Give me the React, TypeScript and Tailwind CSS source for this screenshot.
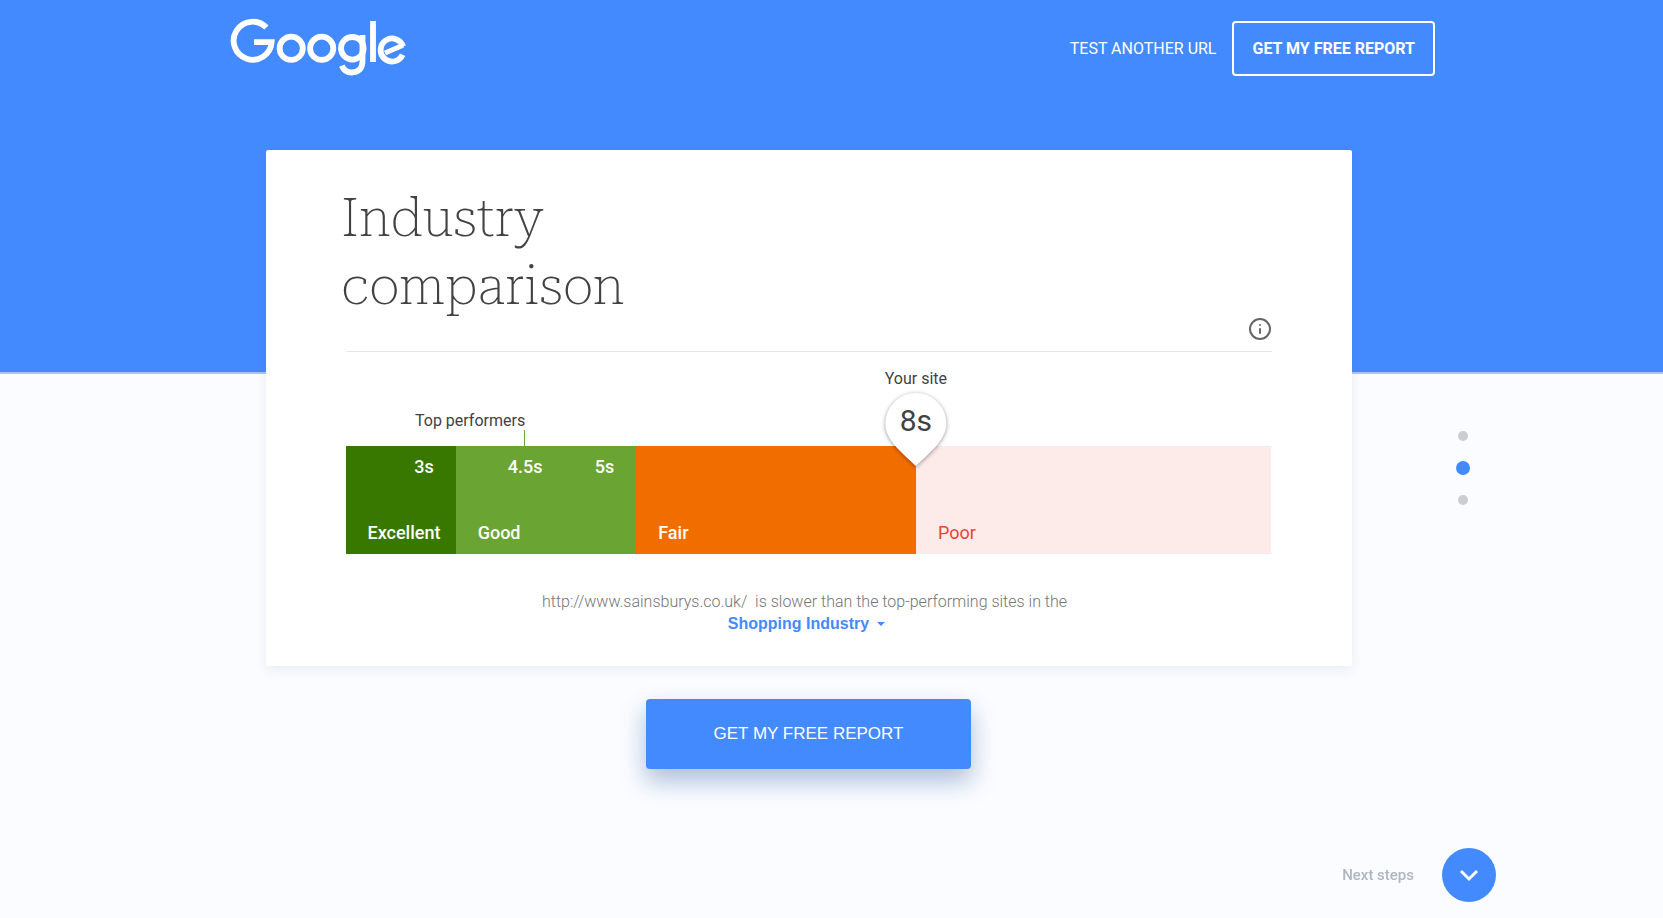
import { ChevronDown, Info } from "lucide-react";

const segments = [
  {
    label: "Excellent",
    limit: "3s",
    className: "w-[11.9%] bg-[#387800] font-medium text-white",
  },
  {
    label: "Good",
    limit: "5s",
    className: "w-[19.5%] bg-[#6aa534] font-medium text-white",
  },
  {
    label: "Fair",
    limit: "",
    className: "w-[30.2%] bg-[#f26d00] font-medium text-white",
  },
  {
    label: "Poor",
    limit: "",
    className: "w-[38.4%] bg-[#fdebe9] text-[#ef4236]",
  },
];

const sections = [
  { label: "Speed", href: "#speed", active: false },
  { label: "Industry comparison", href: "#comparison", active: true },
  { label: "Next steps", href: "#next", active: false },
];

export default function App() {
  return (
    <div className="min-h-screen bg-[#fafcff] font-[Roboto,sans-serif] text-[#424242]">
      <div className="h-[374px] border-b-2 border-[#a3c5ff] bg-[#448aff]">
        <Header />
      </div>

      <main className="relative -mt-56 flex flex-col items-center pr-[46px] pb-16">
        <ComparisonCard />

        <button className="mt-[33px] h-[70px] w-[325px] rounded bg-[#448aff] font-['Liberation_Sans',Arial,sans-serif] text-[17px] text-white shadow-[0_12px_24px_rgba(30,80,150,0.36)]">
          GET MY FREE REPORT
        </button>
      </main>

      <SectionNav />

      <a
        href="#next"
        className="fixed right-[167px] bottom-4 flex items-center gap-7 text-[15px] font-medium text-[#b0b6c1]"
      >
        Next steps
        <span className="flex size-[54px] items-center justify-center rounded-full bg-[#448aff] text-white">
          <ChevronDown className="size-8" strokeWidth={2.2} strokeLinecap="butt" strokeLinejoin="miter" />
        </span>
      </a>
    </div>
  );
}

function Header() {
  return (
    <header className="mx-auto flex max-w-[1207px] items-start justify-between pt-[17px]">
      <a href="#" aria-label="Google">
        <Logo />
      </a>

      <nav className="flex items-center gap-4 pt-1">
        <a href="#test" className="text-white">
          TEST ANOTHER URL
        </a>
        <button className="h-[55px] rounded border-2 border-white px-[18px] font-bold text-white">
          GET MY FREE REPORT
        </button>
      </nav>
    </header>
  );
}

function ComparisonCard() {
  return (
    <section className="w-full max-w-[1086px] rounded-xs bg-white px-20 pt-[34px] pb-[31px] shadow-[0_4px_12px_rgba(40,60,110,0.08)]">
      <div className="flex items-end justify-between border-b border-[#e6e6e6] pb-[10px]">
        <h1 className="-ml-1 max-w-md pb-[21px] font-['Roboto_Slab','Roboto_Serif','Noto_Serif',Roboto,serif] text-[53px] leading-[68px] font-thin">
          Industry comparison
        </h1>
        <button aria-label="About this comparison" className="text-[#666]">
          <Info className="size-6" />
        </button>
      </div>

      <Scale />

      <div className="mt-[37px] flex flex-col items-center pr-2 text-base leading-[22px]">
        <p className="font-light text-[#757575]">
          http://www.sainsburys.co.uk/&nbsp; is slower than the top-performing
          sites in the
        </p>
        <div className="relative flex items-center pl-1 text-[#448aff]">
          <select
            aria-label="Industry"
            className="appearance-none bg-transparent pr-4 font-['Liberation_Sans',Arial,sans-serif] font-bold [field-sizing:content]"
          >
            <option>Shopping Industry</option>
          </select>
          <svg
            className="pointer-events-none absolute right-0 h-1 w-2"
            viewBox="0 0 8 4"
            fill="currentColor"
          >
            <path d="M0 0h8L4 4z" />
          </svg>
        </div>
      </div>
    </section>
  );
}

function Scale() {
  return (
    <div className="relative pt-[94px]">
      <div className="flex h-[108px] text-lg leading-6">
        {segments.map((segment) => (
          <div
            key={segment.label}
            className={`flex flex-col justify-between px-[22px] py-[9px] ${segment.className}`}
          >
            <span className="h-6 text-right">{segment.limit}</span>
            <span>{segment.label}</span>
          </div>
        ))}
      </div>

      <div className="absolute top-[59px] right-[80.6%] flex flex-col items-end">
        <span className="leading-[19px]">Top performers</span>
        <span className="h-4 w-px bg-[#6aa534]" />
      </div>
      <span className="absolute top-[103px] left-[19.4%] -translate-x-1/2 text-lg leading-6 font-medium text-white">
        4.5s
      </span>

      <div className="absolute top-[17px] left-[61.6%] flex -translate-x-1/2 flex-col items-center">
        <span className="leading-5">Your site</span>
        <div className="relative mt-1">
          <svg
            className="h-[73px] w-[62px] overflow-visible drop-shadow-[0_1px_2px_rgba(0,0,0,0.4)]"
            viewBox="0 0 62 73"
            fill="white"
          >
            <path d="M31 73C20 62 0.500 48 0.500 30.500A30.500 30.500 0 0 1 61.500 30.500C61.500 48 42 62 31 73Z" />
          </svg>
          <span className="absolute inset-x-0 top-3 text-center text-[30px] leading-8">
            8s
          </span>
        </div>
      </div>
    </div>
  );
}

function SectionNav() {
  return (
    <nav className="fixed top-[429px] right-[193px] flex w-[14px] flex-col">
      {sections.map((item) => (
        <a
          key={item.href}
          href={item.href}
          aria-label={item.label}
          className="mb-[18px] flex h-[14px] items-center justify-center"
        >
          <span
            className={
              item.active
                ? "size-[14px] rounded-full bg-[#448aff]"
                : "size-[10px] rounded-full bg-[#cccdd2]"
            }
          />
        </a>
      ))}
    </nav>
  );
}

function Logo() {
  return (
    <svg
      className="h-[60px] w-[178px]"
      viewBox="-2 0 178 60"
      fill="none"
      stroke="white"
      strokeWidth="5.8"
    >
      <path d="M36.400 10.600A19 19 0 1 0 41.600 25.200H24" />
      <circle cx="61.200" cy="31.300" r="11.600" />
      <circle cx="91.700" cy="31.300" r="11.600" />
      <circle cx="122.300" cy="31.300" r="11.300" />
      <path d="M132.500 18V44C132.500 52 128 55.500 121.800 55.500C117 55.500 113.500 52.800 111.800 48.600" />
      <path d="M143 4V45" />
      <path d="M155 36L173 28.300" strokeWidth="5" />
      <path d="M173.100 29.500A11.500 11.500 0 1 0 172.600 37.800" />
    </svg>
  );
}
